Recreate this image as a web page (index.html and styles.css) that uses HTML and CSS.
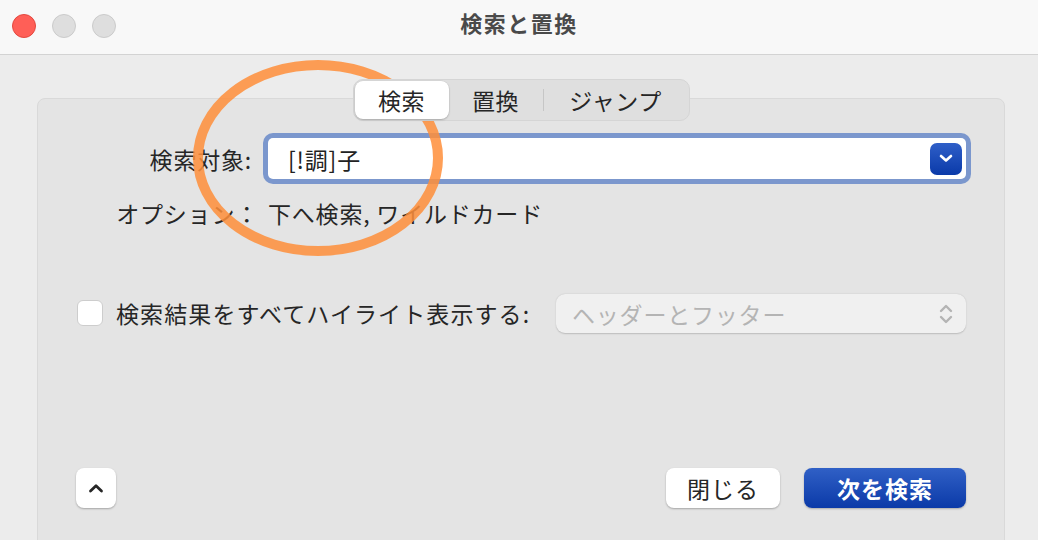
FILE: index.html
```html
<!DOCTYPE html>
<html lang="ja">
<head>
<meta charset="utf-8">
<title>検索と置換</title>
<link rel="stylesheet" href="styles.css">
</head>
<body>
<div class="window">
  <header class="titlebar">
    <div class="lights">
      <span class="light light-close"></span>
      <span class="light light-off"></span>
      <span class="light light-off"></span>
    </div>
    <h1 class="title">検索と置換</h1>
    <div></div>
  </header>

  <main class="content">
    <nav class="tabs">
      <span class="tab tab-find is-active">検索</span>
      <span class="tab tab-replace">置換</span>
      <span class="tab-sep"></span>
      <span class="tab tab-jump">ジャンプ</span>
    </nav>

    <section class="panel">
      <div class="form-grid">
        <label class="form-label">検索対象:</label>
        <div class="combo">
          <span class="combo-text">[!調]子</span>
          <span class="combo-btn">
            <svg width="14" height="9" viewBox="0 0 14 9"><path d="M2 2 L7 6.5 L12 2" fill="none" stroke="#fff" stroke-width="2.6" stroke-linecap="round" stroke-linejoin="round"/></svg>
          </span>
        </div>
        <span class="form-label form-label-wide">オプション：</span>
        <span class="form-value">下へ検索, ワイルドカード</span>
      </div>

      <div class="highlight-row">
        <span class="checkbox"></span>
        <span class="check-label">検索結果をすべてハイライト表示する:</span>
        <div class="popup">
          <span class="popup-text">ヘッダーとフッター</span>
          <svg class="popup-arrows" width="16" height="24" viewBox="0 0 16 24"><path d="M3 9 L8 4 L13 9 M3 15 L8 20 L13 15" fill="none" stroke="#b4b4b4" stroke-width="2.4" stroke-linecap="round" stroke-linejoin="round"/></svg>
        </div>
      </div>

      <div class="footer">
        <button class="btn btn-square" type="button">
          <svg width="16" height="10" viewBox="0 0 16 10"><path d="M2.5 8 L8 2.8 L13.5 8" fill="none" stroke="#262626" stroke-width="2.8" stroke-linecap="round" stroke-linejoin="round"/></svg>
        </button>
        <span class="spacer"></span>
        <button class="btn btn-close" type="button">閉じる</button>
        <button class="btn btn-primary" type="button">次を検索</button>
      </div>
    </section>
  </main>

  <svg class="annotation" width="270" height="216" viewBox="0 0 270 216">
    <ellipse cx="125" cy="98" rx="120" ry="93" fill="none" stroke="#ff8f3a" stroke-width="10"/>
  </svg>
</div>
</body>
</html>
```

FILE: styles.css
```css
* { box-sizing: border-box; }

html, body {
  margin: 0;
  padding: 0;
  width: 1038px;
  height: 540px;
  overflow: hidden;
  background: #ececec;
  font-family: "Noto Sans CJK JP", "Noto Sans", sans-serif;
  color: #262626;
}

.window {
  position: relative;
  width: 1038px;
  height: 540px;
  overflow: hidden;
}

.titlebar {
  height: 55px;
  background: #f8f8f8;
  border-bottom: 1px solid #d3d3d3;
  display: grid;
  grid-template-columns: 1fr auto 1fr;
  align-items: center;
}

.lights {
  display: flex;
  gap: 16px;
  padding-left: 12px;
  padding-bottom: 3px;
}

.light {
  width: 24px;
  height: 24px;
  border-radius: 50%;
}

.light-close {
  background: #ff5f57;
  border: 1px solid #e3483f;
}

.light-off {
  background: #dedede;
  border: 1px solid #cbcbcb;
}

.title {
  margin: 0 0 11px;
  font-size: 22px;
  font-weight: 700;
  color: #4a4a4a;
  line-height: 1;
  letter-spacing: 1.5px;
}

.content {
  display: flex;
  flex-direction: column;
  align-items: center;
  padding: 24px 33px 0 37px;
}

.tabs {
  position: relative;
  z-index: 1;
  display: flex;
  align-items: center;
  height: 42px;
  padding: 1px;
  margin-bottom: -23px;
  background: #dfdfdf;
  border: 1px solid #d5d5d5;
  border-radius: 10px;
}

.tab {
  display: flex;
  align-items: center;
  justify-content: center;
  height: 38px;
  font-size: 23px;
  letter-spacing: 0.6px;
  color: #262626;
  border-radius: 8px;
}

.tab-find { width: 94px; }
.tab-replace { width: 94px; }
.tab-jump { width: 144px; }

.tab.is-active {
  background: #ffffff;
  box-shadow: 0 1px 2px rgba(0, 0, 0, 0.22), 0 0 0 0.5px rgba(0, 0, 0, 0.06);
}

.tab-sep {
  width: 1px;
  height: 22px;
  background: #c6c6c6;
}

.panel {
  align-self: stretch;
  height: 460px;
  background: #e4e4e4;
  border: 1px solid #d9d9d9;
  border-radius: 8px;
  padding: 39px 38px 0;
}

.form-grid {
  display: grid;
  grid-template-columns: 176px 1fr;
  column-gap: 16px;
  row-gap: 19px;
  align-items: center;
}

.form-label {
  justify-self: end;
  text-align: right;
  font-size: 23px;
  letter-spacing: 0.8px;
  line-height: 30px;
  white-space: nowrap;
}

.form-label-wide {
  margin-right: -7px;
}

.form-value {
  font-size: 23px;
  letter-spacing: 0.8px;
  line-height: 30px;
  white-space: nowrap;
}

.combo {
  height: 41px;
  display: flex;
  align-items: center;
  background: #ffffff;
  border-radius: 5px;
  box-shadow: 0 0 0 5px #7b97cd;
  padding: 0 4px 0 20px;
}

.combo-text {
  flex: 1;
  font-size: 23px;
  letter-spacing: 0.8px;
  color: #222;
}

.combo-btn {
  width: 32px;
  height: 32px;
  border-radius: 7px;
  background: linear-gradient(#2f5fc8, #0a3aa9);
  display: flex;
  align-items: center;
  justify-content: center;
}

.highlight-row {
  display: flex;
  align-items: center;
  height: 39px;
  margin-top: 66px;
}

.checkbox {
  width: 26px;
  height: 26px;
  margin-left: 1px;
  margin-bottom: 2px;
  background: #ffffff;
  border: 1px solid #cdcdcd;
  border-radius: 6px;
}

.check-label {
  margin-left: 13px;
  margin-bottom: 2px;
  font-size: 23px;
  letter-spacing: 1.1px;
  white-space: nowrap;
}

.popup {
  margin-left: auto;
  flex: 0 0 410px;
  height: 39px;
  display: flex;
  align-items: center;
  padding: 0 12px 0 16px;
  background: #f0f0f0;
  border-radius: 9px;
  box-shadow: 0 0.5px 1.5px rgba(0, 0, 0, 0.18);
}

.popup-text {
  flex: 1;
  font-size: 23px;
  letter-spacing: 0.8px;
  color: #b4b4b4;
}

.footer {
  display: flex;
  align-items: center;
  gap: 24px;
  margin-top: 135px;
}

.spacer { flex: 1; }

.btn {
  height: 40px;
  border: none;
  border-radius: 8px;
  font-family: inherit;
  font-size: 23px;
  letter-spacing: 1px;
  display: flex;
  align-items: center;
  justify-content: center;
  padding: 0;
  cursor: default;
}

.btn-square {
  width: 40px;
  background: #ffffff;
  box-shadow: 0 1px 2px rgba(0, 0, 0, 0.28);
}

.btn-close {
  width: 114px;
  background: #ffffff;
  color: #262626;
  box-shadow: 0 1px 2px rgba(0, 0, 0, 0.28);
}

.btn-primary {
  width: 162px;
  color: #ffffff;
  font-weight: 700;
  background: linear-gradient(#3060c6, #0b3aa8);
  box-shadow: 0 1px 2px rgba(0, 0, 0, 0.25);
}

.annotation {
  position: absolute;
  left: 193px;
  top: 60px;
  opacity: 0.85;
  pointer-events: none;
}
```
